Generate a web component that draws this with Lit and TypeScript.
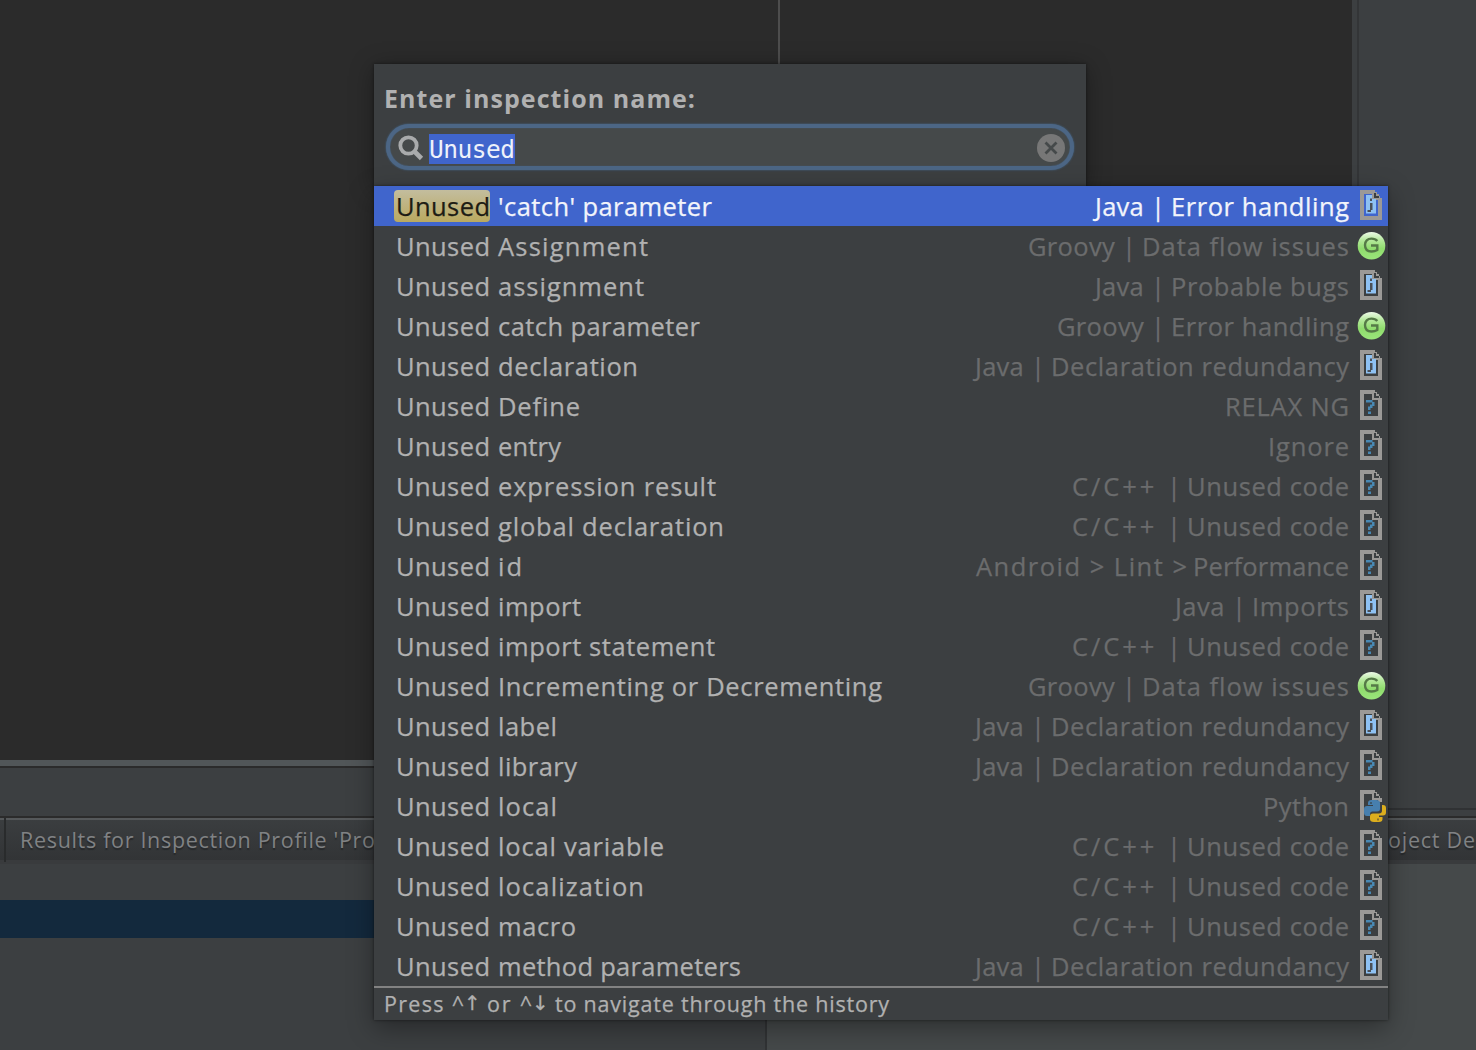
import { LitElement, html, css, svg, nothing } from "lit";
import { customElement, property } from "lit/decorators.js";

type Kind = "java" | "groovy" | "unknown" | "python";
type Group = { lead: string; lw: number; tail: string; tw: number };
type Row = { name: string; w: number; group: Group; kind: Kind };

const group = (lead: string, lw: number, tail: string, tw: number): Group => ({ lead, lw, tail, tw });
const JAVA_ERR = group("Java |", 70, "Error handling", 176);
const GROOVY_FLOW = group("Groovy |", 108, "Data flow issues", 205);
const JAVA_BUGS = group("Java |", 70, "Probable bugs", 176);
const GROOVY_ERR = group("Groovy |", 108, "Error handling", 176);
const JAVA_DECL = group("Java |", 70, "Declaration redundancy", 296);
const JAVA_IMPORTS = group("Java |", 71, "Imports", 95);
const CPP = group("C/C++ |", 109, "Unused code", 160);
const LINT = group("Android > Lint >", 211, "Performance", 154);

const ROWS: Row[] = [
  { name: "'catch' parameter", w: 214, group: JAVA_ERR, kind: "java" },
  { name: "Assignment", w: 150, group: GROOVY_FLOW, kind: "groovy" },
  { name: "assignment", w: 146, group: JAVA_BUGS, kind: "java" },
  { name: "catch parameter", w: 202, group: GROOVY_ERR, kind: "groovy" },
  { name: "declaration", w: 140, group: JAVA_DECL, kind: "java" },
  { name: "Define", w: 82, group: group("", 0, "RELAX NG", 122), kind: "unknown" },
  { name: "entry", w: 63, group: group("", 0, "Ignore", 79), kind: "unknown" },
  { name: "expression result", w: 218, group: CPP, kind: "unknown" },
  { name: "global declaration", w: 226, group: CPP, kind: "unknown" },
  { name: "id", w: 24, group: LINT, kind: "unknown" },
  { name: "import", w: 83, group: JAVA_IMPORTS, kind: "java" },
  { name: "import statement", w: 217, group: CPP, kind: "unknown" },
  { name: "Incrementing or Decrementing", w: 384, group: GROOVY_FLOW, kind: "groovy" },
  { name: "label", w: 59, group: JAVA_DECL, kind: "java" },
  { name: "library", w: 79, group: JAVA_DECL, kind: "unknown" },
  { name: "local", w: 59, group: group("", 0, "Python", 84), kind: "python" },
  { name: "local variable", w: 166, group: CPP, kind: "unknown" },
  { name: "localization", w: 146, group: CPP, kind: "unknown" },
  { name: "macro", w: 78, group: CPP, kind: "unknown" },
  { name: "method parameters", w: 243, group: JAVA_DECL, kind: "java" },
];

/* Text tracked out or in so that it fills a given width. */
@customElement("fit-text")
class FitText extends LitElement {
  static styles = css`
    :host { display: block; white-space: pre; flex: none; }
    .t { display: inline-block; }
  `;
  @property() text = "";
  @property({ type: Number }) width = 0;
  render() {
    return html`<span class="t">${this.text}</span>`;
  }
  updated() {
    const t = this.renderRoot.querySelector(".t") as HTMLElement;
    t.style.letterSpacing = "0px";
    const natural = t.getBoundingClientRect().width;
    const gap = (this.width - natural) / Math.max(1, this.text.length - 1);
    t.style.letterSpacing = gap + "px";
    t.style.marginRight = -gap + "px";
  }
}

@customElement("kind-icon")
class KindIcon extends LitElement {
  static styles = css`
    :host { display: block; width: 30px; height: 32px; flex: none; }
    svg { display: block; }
  `;
  @property() kind: Kind = "java";
  render() {
    const sheet = svg`
      <path fill="#9b9997" fill-rule="evenodd" d="M4 0H19V2H21V4H23V6H24V8H26V30H4ZM8 4V26H22V10H16V4Z"/>
      <path fill="#3c3f41" d="M18 3H20V6H23V8H18Z"/>`;
    const body = {
      java: svg`${sheet}
        <path fill="#8ec1f3" d="M10 5H16V9H20V23.500H10Z"/>
        <path fill="#4a5058" d="M14 8.500H16V11H14ZM14 13H16.500V20H15V22H11.500V20H14Z"/>`,
      unknown: svg`${sheet}
        <path fill="#4788b4" d="M10 10H16.500V12H18.500V16H16.500V18H14.500V20H12V16.500H14V14.500H16V12.500H10ZM12 21.500H15V24H12Z"/>`,
      groovy: svg`
        <defs>
          <linearGradient id="g" x1="0" y1="0" x2="0" y2="1">
            <stop offset="0" stop-color="#eefae8"/><stop offset=".3" stop-color="#b4e89b"/>
            <stop offset=".6" stop-color="#8fdc6d"/><stop offset="1" stop-color="#9be67b"/>
          </linearGradient>
        </defs>
        <circle cx="15.500" cy="15.800" r="13.800" fill="url(#g)"/>
        <path fill="none" stroke="#557a47" stroke-width="2.400" d="M21.300 11C19.800 9.200 17.800 8.600 15.500 8.600C11.500 8.600 9 11.200 9 15C9 19 11.500 21.500 15.500 21.500C17.900 21.500 19.700 20.900 21.300 19.900V15.500H15"/>`,
      python: svg`
        <path fill="#9b9997" d="M4 0H19V2H21V4H23V6H24V8H26V12H22V10H16V4H8V30H4Z"/>
        <path fill="#3c3f41" d="M18 3H20V6H23V8H18Z"/>
        <path fill="#477fae" d="M12 13Q12 10 15.500 10H20Q24 10 24 13V19Q24 21.500 21 21.500H16Q14 21.500 14 24V26H11Q8 26 8 22.500V19Q8 16 11 16H17V15H12Z"/>
        <path fill="#dcae1e" d="M26 15H27Q30 15 30 18V22.500Q30 25.500 27 25.500H23V27H26.500V29Q26.500 32 23 32H18Q14 32 14 29V26.500Q14 23.500 17 23.500H23Q26 23.500 26 20.500Z"/>
        <path fill="#3c5a70" d="M14 12H16V14H14Z"/>
        <path fill="#8a722c" d="M21 28.500H23V30.500H21Z"/>`,
    }[this.kind];
    return html`<svg width="30" height="32" viewBox="0 0 30 32">${body}</svg>`;
  }
}

@customElement("inspection-popup")
class InspectionPopup extends LitElement {
  static styles = css`
    :host {
      display: block; width: 1014px; color: #b1b1b1; font: 25.500px/40px "Open Sans", "Noto Sans", sans-serif;
      -webkit-text-stroke: .25px currentColor;
    }
    .head {
      box-sizing: border-box; width: 712px; height: 122px; padding: 16px 12px 0 10px;
      background: #3c3f41; box-shadow: 0 4px 22px rgba(0,0,0,.35), 0 0 3px rgba(0,0,0,.45);
      display: flex; flex-direction: column;
    }
    .title { font-weight: 700; font-size: 25px; line-height: 37px; height: 44px; -webkit-text-stroke: 0; }
    .field {
      box-sizing: border-box; display: flex; align-items: center; height: 46px; width: 688px; margin-left: 2px;
      padding: 1px 5px 0 8px; border: 4px solid #4c6685; border-radius: 23px; background: #45494a;
      box-shadow: inset 0 0 1px #466d94, 0 0 2px #466d94;
    }
    .glass { flex: none; margin-right: 5px; }
    .sel {
      background: #4065cc; color: #eef1fa; height: 30px; width: 86px; line-height: 31px; margin-top: 2px;
      font-family: "DejaVu Sans Mono", "Liberation Mono", monospace; font-size: 24.500px; margin-right: auto;
      -webkit-text-stroke: 0;
    }
    .list { position: relative; background: #3c3f41; box-shadow: 0 8px 24px rgba(0,0,0,.35), 0 0 3px rgba(0,0,0,.5); }
    .row { display: flex; align-items: center; height: 40px; padding: 0 2px 0 22px; }
    .row fit-text { height: 40px; line-height: 41px; }
    .first { width: 102px; }
    .group { display: flex; margin-left: auto; color: #6b6c6d; margin-right: 7px; gap: 6px; }
    .row.on { background: #4065cc; color: #f2f4fb; }
    .row.on .group { color: #f2f4fb; }
    .row.on .first { color: #1d1c14; }
    .mark {
      box-sizing: border-box; width: 96px; height: 32px; margin: 0 8px 0 -2px; padding-left: 2px;
      border-radius: 4px; background: linear-gradient(#c3bd9e, #baa95f);
    }
    .mark fit-text { height: 32px; line-height: 33px; }
    .foot {
      display: flex; height: 32px; border-top: 2px solid #828282; padding-left: 10px;
      font-size: 21.500px; line-height: 31px;
    }
    .arrow { display: flex; justify-content: center; width: 17px; margin-right: 6px; font-family: "DejaVu Sans", sans-serif; font-size: 20px; }
  `;
  render() {
    return html`
      <div class="head">
        <div class="title"><fit-text text="Enter inspection name:" width="311"></fit-text></div>
        <div class="field">
          <svg class="glass" width="26" height="26" viewBox="0 0 26 26" fill="none" stroke="#a9abac">
            <circle cx="10.500" cy="10.500" r="8.200" stroke-width="3.800"/>
            <path d="M16.500 16.500L23.500 23.500" stroke-width="4.600"/>
          </svg>
          <div class="sel"><fit-text text="Unused" width="86"></fit-text></div>
          <svg width="28" height="28" viewBox="0 0 28 28">
            <circle cx="14" cy="14" r="14" fill="#777"/>
            <path d="M8.500 8.500L19.500 19.500M19.500 8.500L8.500 19.500" stroke="#45494a" stroke-width="2.800"/>
          </svg>
        </div>
      </div>
      <div class="list">
        ${ROWS.map((r, i) => html`
          <div class="row ${i === 0 ? "on" : ""}">
            ${i === 0
              ? html`<div class="mark first"><fit-text text="Unused" width="94"></fit-text></div>`
              : html`<fit-text class="first" text="Unused" width="94"></fit-text>`}
            <fit-text text=${r.name} width=${r.w}></fit-text>
            <div class="group">
              ${r.group.lead ? html`<fit-text text=${r.group.lead} width=${r.group.lw}></fit-text>` : nothing}
              <fit-text text=${r.group.tail} width=${r.group.tw + 2}></fit-text>
            </div>
            <kind-icon kind=${r.kind}></kind-icon>
          </div>`)}
        <div class="foot">
          <fit-text text="Press ^" width="80"></fit-text><span class="arrow">↑</span>
          <fit-text text="or ^" width="45"></fit-text><span class="arrow">↓</span>
          <fit-text text="to navigate through the history" width="334"></fit-text>
        </div>
      </div>`;
  }
}

@customElement("app-root")
class AppRoot extends LitElement {
  static styles = css`
    :host {
      display: block; position: relative; width: 1476px; height: 1050px; overflow: hidden;
      background: #3c3f41; font: 21.500px/40px "Open Sans", "Noto Sans", sans-serif; color: #808284;
    }
    .page { display: flex; flex-direction: column; height: 1050px; }
    .top { display: flex; height: 816px; }
    .work { width: 1352px; display: flex; flex-direction: column; }
    .editor { display: flex; height: 760px; background: #2b2b2b; }
    .code { width: 778px; border-right: 2px solid #4d4d4d; }
    .split { height: 6px; background: #515658; border-bottom: 2px solid #2b2b2b; }
    .side { box-sizing: border-box; flex: 1; height: 810px; margin-left: 5px; border-left: 2px solid #333537; border-bottom: 2px solid #303234; }
    .tabs {
      display: flex; box-sizing: border-box; height: 48px; border-top: 2px solid #2b2b2b;
      box-shadow: inset 0 2px #55585a, inset 0 -4px #393b3d; background: linear-gradient(#3b3e40, #313335);
    }
    .stub { width: 4px; height: 44px; border-right: 2px solid #292b2c; }
    .tab { width: 1368px; padding-left: 14px; line-height: 43px; text-shadow: 0 2px 1px #26282a; }
    .tab.far { width: 88px; padding-left: 0; }
    .bottom { display: flex; flex: 1; }
    .tree { width: 765px; border-right: 2px solid #313335; display: flex; flex-direction: column; }
    .picked { margin-top: 36px; height: 38px; background: #13293d; }
    .detail { flex: 1; background: #45494a; }
    .popup { position: absolute; left: 374px; top: 64px; }
  `;
  render() {
    return html`
      <div class="page">
        <div class="top">
          <div class="work">
            <div class="editor"><div class="code"></div></div>
            <div class="split"></div>
          </div>
          <div class="side"></div>
        </div>
        <div class="tabs">
          <div class="stub"></div>
          <div class="tab"><fit-text text="Results for Inspection Profile 'Pro" width="355"></fit-text></div>
          <div class="tab far"><fit-text text="oject De" width="87"></fit-text></div>
        </div>
        <div class="bottom">
          <div class="tree"><div class="picked"></div></div>
          <div class="detail"></div>
        </div>
      </div>
      <inspection-popup class="popup"></inspection-popup>`;
  }
}
